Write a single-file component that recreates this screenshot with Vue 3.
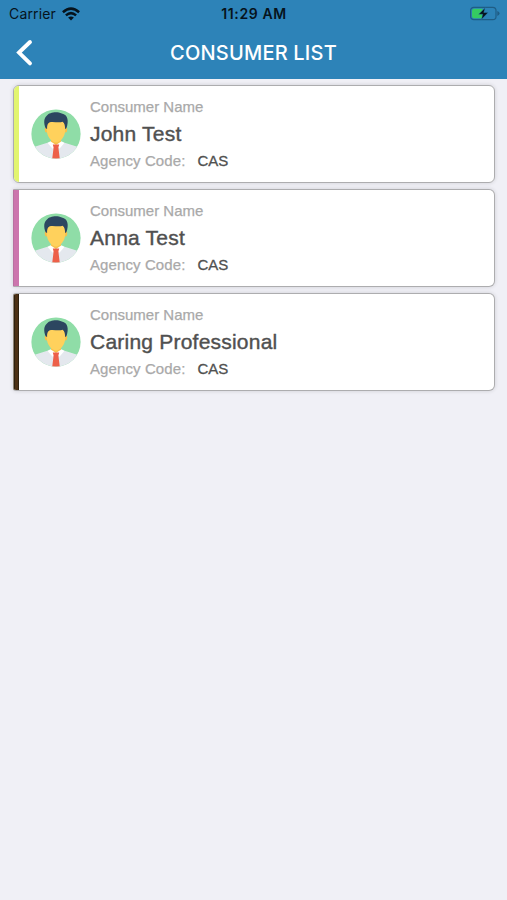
<script setup>
const consumers = [
  { name: 'John Test', agency: 'CAS', tone: 'lime' },
  { name: 'Anna Test', agency: 'CAS', tone: 'pink' },
  { name: 'Caring Professional', agency: 'CAS', tone: 'brown' },
]
</script>

<template>
  <div class="screen">
    <header class="header">
      <div class="status">
        <div class="carrier">
          <span>Carrier</span>
          <svg class="wifi" width="18" height="14" viewBox="0 0 18 14">
            <g fill="none" stroke="#06131c" stroke-width="2.5">
              <path d="M.9 5.2Q9-1.9 17.1 5.2" />
              <path d="M3.9 8.4Q9 3.9 14.1 8.4" />
            </g>
            <path d="M6.1 10.6Q9 8.2 11.9 10.6L9 13.5Z" fill="#06131c" />
          </svg>
        </div>
        <div class="time">11:29 AM</div>
        <svg class="battery" width="32" height="16" viewBox="0 0 32 16">
          <rect x="1.6" y="1.3" width="25.4" height="12.4" rx="3.2" fill="none" stroke="#1f5d85" stroke-width="1.2" />
          <path d="M5 2.8h8.5v9.4H5a2 2 0 0 1-2-2V4.8a2 2 0 0 1 2-2z" fill="#35cb62" />
          <path d="M28.3 5.1Q30.6 6 30.6 7.5T28.3 9.9Z" fill="#1f5d85" />
          <path d="M16.2 1.7L9.6 8.3h4.1L12.4 13.5l6.7-7h-4.3z" fill="#06131c" stroke="#2c83b8" stroke-width=".4" />
        </svg>
      </div>
      <div class="nav">
        <svg class="back" width="18" height="28" viewBox="0 0 18 28">
          <path d="M15 3L4 13.6l11 10.8" fill="none" stroke="#fff" stroke-width="3.9" stroke-linecap="round" />
        </svg>
        <h1 class="title">CONSUMER LIST</h1>
      </div>
    </header>

    <main class="list">
      <article v-for="c in consumers" :key="c.name" class="card" :class="c.tone">
        <div class="strip"></div>
        <svg class="avatar" width="50" height="50" viewBox="0 0 50 50">
          <defs>
            <clipPath id="disc"><circle cx="25" cy="25" r="24.6" /></clipPath>
          </defs>
          <g clip-path="url(#disc)">
            <rect width="50" height="50" fill="#8fdda7" />
            <path d="M0 50V42Q1 38.3 6 37L18 33.2h14L44 37Q49 38.3 50 42V50Z" fill="#e4e8ee" />
            <path d="M20 26h10v8l-5 3-5-3z" fill="#f7c04c" />
            <path d="M19.4 32.2L25 36 21.6 39.8 16.6 34ZM30.6 32.2L25 36l3.4 3.8 5-5.8z" fill="#fff" />
            <path d="M21.8 35.4h6.4l-.8 3.2L28.8 50h-7.6l1.4-11.4z" fill="#ed6049" />
            <ellipse cx="15.4" cy="20.6" rx="1.7" ry="2.8" fill="#f7c04c" />
            <ellipse cx="34.6" cy="20.6" rx="1.7" ry="2.8" fill="#f7c04c" />
            <path d="M15.8 12h18.4v9c0 6.4-4.6 12.4-9.2 12.4S15.8 27.4 15.8 21z" fill="#ffd15c" />
            <path d="M14.6 19.2C12.6 14 12.6 9 16.2 6.2 18 3.6 25.5 1.8 30.8 4.4 37 5.6 38 12 35.4 19.2l-1.4.8c.2-3.2-.4-5.8-2.4-7.2-4 1.5-8.9-.6-12.8.4-2.3.8-2.9 3.8-2.7 6.8z" fill="#2c4660" />
          </g>
        </svg>
        <div class="details">
          <div class="label">Consumer Name</div>
          <div class="name">{{ c.name }}</div>
          <div class="agency">
            <span class="label code">Agency Code:</span>
            <span class="value">{{ c.agency }}</span>
          </div>
        </div>
      </article>
    </main>
  </div>
</template>

<style>
body {
  background: #f0f0f6;
}
</style>

<style scoped>
.screen {
  min-height: 900px;
  background: #f0f0f6;
  font-family: "Liberation Sans", Arial, sans-serif;
}
.header {
  height: 79px;
  background: #2d83b8;
}
.status {
  display: grid;
  grid-template-columns: 1fr auto 1fr;
  align-items: center;
  height: 27px;
  padding: 0 8px 0 9px;
  font-family: Inter, sans-serif;
  font-size: 14px;
  color: #06131c;
}
.carrier {
  display: flex;
  align-items: center;
  gap: 6px;
  letter-spacing: 0.15px;
}
.time {
  font-weight: 600;
  letter-spacing: 0.6px;
}
.battery {
  justify-self: end;
  margin-right: -2px;
}
.nav {
  display: grid;
  grid-template-columns: 1fr auto 1fr;
  align-items: center;
  height: 51px;
  padding: 0 15px;
}
.title {
  margin: 0;
  font: 500 20px/28px Inter, sans-serif;
  letter-spacing: 0.2px;
  color: #fff;
}
.list {
  display: flex;
  flex-direction: column;
  gap: 6px;
  padding: 6px 12px 0 13px;
}
.card {
  display: flex;
  box-sizing: border-box;
  height: 98px;
  overflow: hidden;
  background: #fff;
  border: 1px solid #adadaf;
  border-radius: 6px;
  box-shadow: 0 0 4px rgba(0, 0, 0, 0.14);
}
.strip {
  flex: none;
  width: 5px;
}
.lime .strip {
  background: #e2f56f;
}
.pink {
  border-top-left-radius: 1px;
  border-bottom-left-radius: 1px;
  border-left-color: #b871a0;
}
.pink .strip {
  background: #cc75ad;
}
.brown {
  border-top-left-radius: 3px;
  border-bottom-left-radius: 3px;
  border-left-color: #8d8374;
}
.brown .strip {
  background: #4c3014;
  border-left: 1px solid #2e210f;
  border-right: 1px solid #2e210f;
  box-sizing: border-box;
}
.avatar {
  flex: none;
  margin: 23px 0 0 12px;
}
.details {
  padding: 12px 0 0 9px;
}
.label {
  font-size: 15px;
  line-height: 18px;
  color: #a9a9a9;
  -webkit-text-stroke: 0.25px #a9a9a9;
}
.name {
  margin: 5px 0;
  font-size: 21px;
  line-height: 26px;
  letter-spacing: 0.22px;
  color: #505050;
  -webkit-text-stroke: 0.4px #505050;
}
.agency {
  display: flex;
  gap: 12px;
}
.code {
  letter-spacing: 0.1px;
}
.value {
  font-size: 15px;
  line-height: 18px;
  color: #505050;
  -webkit-text-stroke: 0.3px #505050;
}
</style>
